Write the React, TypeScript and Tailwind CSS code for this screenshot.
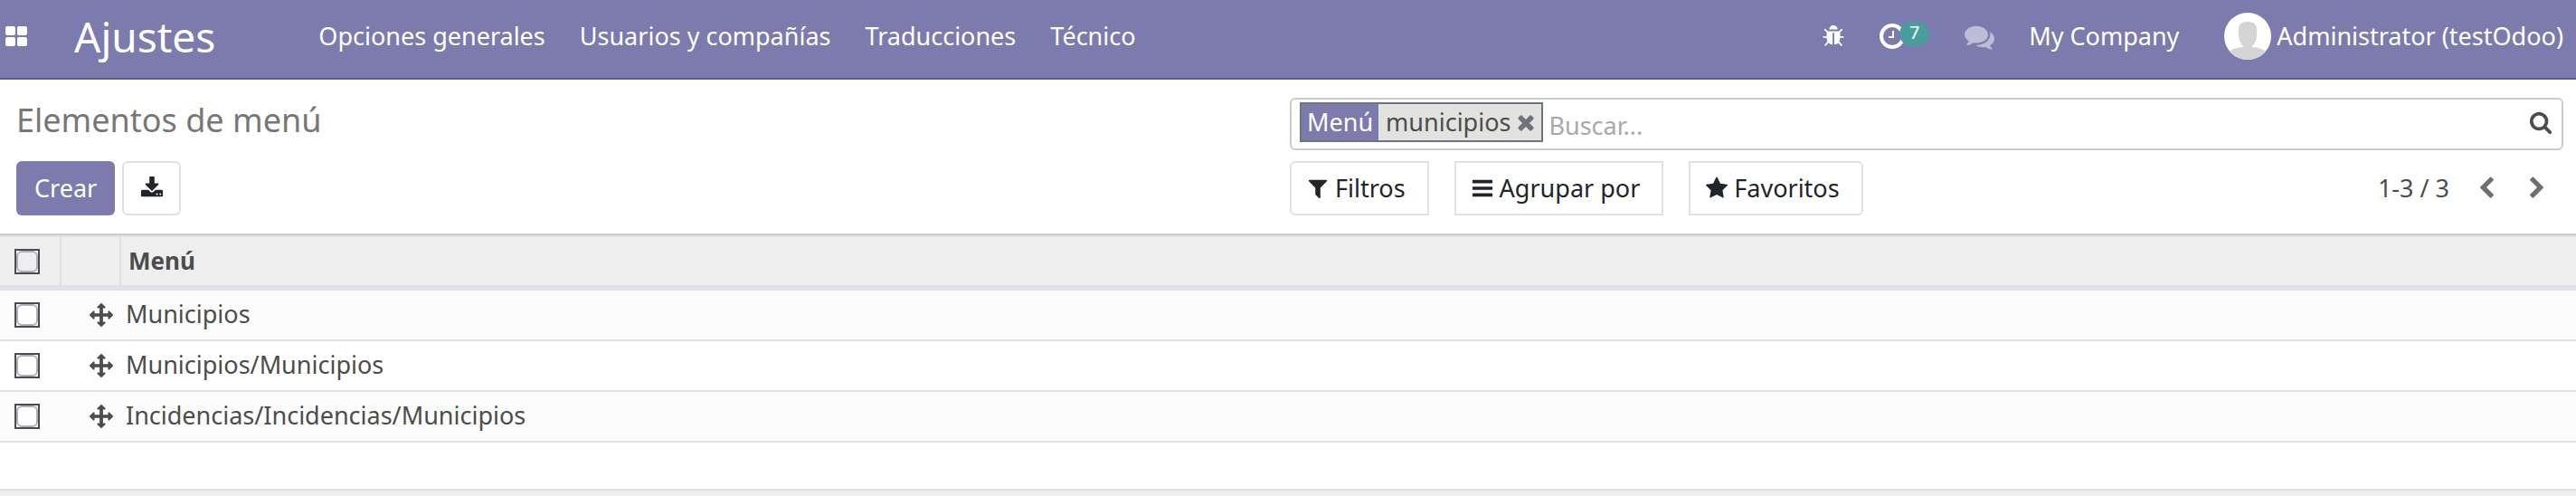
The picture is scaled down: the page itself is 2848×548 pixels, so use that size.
import React from "react";

const PATHS = {
  bug: "M1696 960q0 26-19 45t-45 19h-224q0 171-67 290l208 209q19 19 19 45t-19 45q-18 19-45 19t-45-19l-198-197q-5 5-15 13t-42 28.5-65 36.5-82 29-97 13v-896h-128v896q-51 0-101.5-13.5t-87-33-66-39-43.5-32.5l-15-14-183 207q-20 21-48 21-24 0-43-16-19-18-20.5-44.5t15.5-46.5l202-227q-58-114-58-274h-224q-26 0-45-19t-19-45 19-45 45-19h224v-294l-173-173q-19-19-19-45t19-45 45-19 45 19l173 173h844l173-173q19-19 45-19t45 19 19 45-19 45l-173 173v294h224q26 0 45 19t19 45zm-480-576h-640q0-133 93.5-226.5t226.5-93.5 226.5 93.5 93.5 226.5z",
  comments:
    "M1408 768q0 139-94 257t-256.5 186.5-353.5 68.5q-86 0-176-16-124 88-278 128-36 9-86 16h-3q-11 0-20.5-8t-11.5-21q-1-3-1-6.5t.5-6.5 2-6l2.5-5 3.5-5.5 4-5 4.5-5 4-4.5q5-6 23-25t26-29.5 22.5-29 25-38.5 20.5-44q-124-72-195-177t-71-224q0-139 94-257t256.5-186.5 353.5-68.5 353.5 68.5 256.5 186.5 94 257zm384 256q0 120-71 224.5t-195 176.5q10 24 20.5 44t25 38.5 22.5 29 26 29.5 23 25q1 1 4 4.5t4.5 5 4 5 3.5 5.5l2.5 5 2 6 .5 6.5-1 6.5q-3 14-13 22t-22 7q-50-7-86-16-154-40-278-128-90 16-176 16-271 0-472-132 58 4 88 4 161 0 309-45t264-129q125-92 192-212t67-254q0-77-23-152 129 71 204 178t75 230z",
  download:
    "M1344 1344q0-26-19-45t-45-19-45 19-19 45 19 45 45 19 45-19 19-45zm256 0q0-26-19-45t-45-19-45 19-19 45 19 45 45 19 45-19 19-45zm128-224v320q0 40-28 68t-68 28h-1472q-40 0-68-28t-28-68v-320q0-40 28-68t68-28h465l135 136q58 56 136 56t136-56l136-136h464q40 0 68 28t28 68zm-325-569q17 41-14 70l-448 448q-18 19-45 19t-45-19l-448-448q-31-29-14-70 17-39 59-39h256v-448q0-26 19-45t45-19h256q26 0 45 19t19 45v448h256q42 0 59 39z",
  filter:
    "M1595 295q17 41-14 70l-493 493v742q0 42-39 59-13 5-25 5-27 0-45-19l-256-256q-19-19-19-45v-486l-493-493q-31-29-14-70 17-39 59-39h1280q42 0 59 39z",
  bars: "M1664 1344v128q0 26-19 45t-45 19h-1408q-26 0-45-19t-19-45v-128q0-26 19-45t45-19h1408q26 0 45 19t19 45zm0-512v128q0 26-19 45t-45 19h-1408q-26 0-45-19t-19-45v-128q0-26 19-45t45-19h1408q26 0 45 19t19 45zm0-512v128q0 26-19 45t-45 19h-1408q-26 0-45-19t-19-45v-128q0-26 19-45t45-19h1408q26 0 45 19t19 45z",
  star: "M1728 647q0 22-26 48l-363 354 86 500q1 7 1 20 0 21-10.5 35.5t-30.5 14.5q-19 0-40-12l-449-236-449 236q-22 12-40 12-21 0-31.5-14.5t-10.5-35.5q0-6 2-20l86-500-364-354q-25-27-25-48 0-37 56-46l502-73 225-455q19-41 49-41t49 41l225 455 502 73q56 9 56 46z",
  search:
    "M1216 832q0-185-131.5-316.5t-316.5-131.5-316.5 131.5-131.5 316.5 131.5 316.5 316.5 131.5 316.5-131.5 131.5-316.5zm512 832q0 52-38 90t-90 38q-54 0-90-38l-343-342q-179 124-399 124-143 0-273.5-55.5t-225-150-150-225-55.5-273.5 55.5-273.5 150-225 225-150 273.5-55.5 273.5 55.5 225 150 150 225 55.5 273.5q0 220-124 399l343 343q37 37 37 90z",
  times:
    "M1490 1322q0 40-28 68l-136 136q-28 28-68 28t-68-28l-294-294-294 294q-28 28-68 28t-68-28l-136-136q-28-28-28-68t28-68l294-294-294-294q-28-28-28-68t28-68l136-136q28-28 68-28t68 28l294 294 294-294q28-28 68-28t68 28l136 136q28 28 28 68t-28 68l-294 294 294 294q28 28 28 68z",
  left: "M1427 301l-531 531 531 531q19 19 19 45t-19 45l-166 166q-19 19-45 19t-45-19l-742-742q-19-19-19-45t19-45l742-742q19-19 45-19t45 19l166 166q19 19 19 45t-19 45z",
  right:
    "M1363 877l-742 742q-19 19-45 19t-45-19l-166-166q-19-19-19-45t19-45l531-531-531-531q-19-19-19-45t19-45l166-166q19-19 45-19t45 19l742 742q19 19 19 45t-19 45z",
  arrows:
    "M1792 896q0 26-19 45l-256 256q-19 19-45 19t-45-19-19-45v-128h-384v384h128q26 0 45 19t19 45-19 45l-256 256q-19 19-45 19t-45-19l-256-256q-19-19-19-45t19-45 45-19h128v-384h-384v128q0 26-19 45t-45 19-45-19l-256-256q-19-19-19-45t19-45l256-256q19-19 45-19t45 19 19 45v128h384v-384h-128q-26 0-45-19t-19-45 19-45l256-256q19-19 45-19t45 19l256 256q19 19 19 45t-19 45-45 19h-128v384h384v-128q0-26 19-45t45-19 45 19l256 256q19 19 19 45z",
};

function Icon({ name, className = "size-[26px]" }: { name: keyof typeof PATHS; className?: string }) {
  return (
    <svg viewBox="0 0 1792 1792" fill="currentColor" aria-hidden="true" className={`shrink-0 ${className}`}>
      <path d={PATHS[name]} />
    </svg>
  );
}

function CheckBox({ label, className = "bg-white" }: { label: string; className?: string }) {
  return (
    <span className="flex size-7 border-2 border-[#4c4c4c] bg-white">
      <input
        type="checkbox"
        aria-label={label}
        className={`size-6 appearance-none rounded-md border-2 border-[#adb1bd] checked:bg-[#7c7bad] ${className}`}
      />
    </span>
  );
}

const MENU = ["Opciones generales", "Usuarios y compañías", "Traducciones", "Técnico"];
const ROWS = ["Municipios", "Municipios/Municipios", "Incidencias/Incidencias/Municipios"];

function Navbar() {
  return (
    <header className="flex h-[88px] items-center border-b-2 border-[#5f5e97] bg-[#7c7bad] pr-[14px] pb-[6px] pl-[6px] whitespace-nowrap text-white">
      <button type="button" aria-label="Aplicaciones" className="shrink-0">
        <svg viewBox="0 0 24 22" fill="currentColor" className="h-[22px] w-6">
          <rect width="11" height="10" rx="2" />
          <rect x="13" width="11" height="10" rx="2" />
          <rect y="12" width="11" height="10" rx="2" />
          <rect x="13" y="12" width="11" height="10" rx="2" />
        </svg>
      </button>
      <a href="#ajustes" className="ml-[52px] text-[46px] leading-none">
        Ajustes
      </a>
      <nav className="ml-[114px] flex gap-[38px]">
        {MENU.map((item) => (
          <a key={item} href="#menu">
            {item}
          </a>
        ))}
      </nav>
      <div className="ml-auto flex items-center">
        <button type="button" aria-label="Depurar" className="mr-[38px]">
          <Icon name="bug" />
        </button>
        <button type="button" aria-label="Actividades" className="relative mr-[66px]">
          <svg viewBox="0 0 28 28" fill="none" stroke="currentColor" className="size-7">
            <circle cx="14" cy="14" r="12" strokeWidth="4" />
            <path d="M15 8v7h-5" strokeWidth="2" />
          </svg>
          <span className="absolute -top-[2px] left-[22px] flex h-[27px] w-[33px] items-center justify-center rounded-full bg-[#489e9b] pb-1 text-xl leading-none">
            7
          </span>
        </button>
        <button type="button" aria-label="Conversaciones" className="mr-[38px] opacity-50">
          <Icon name="comments" className="size-[33px]" />
        </button>
        <a href="#company">My Company</a>
        <button type="button" className="ml-[50px] flex items-center gap-[6px]">
          <svg viewBox="0 0 52 52" className="size-[52px] shrink-0">
            <defs>
              <clipPath id="avatar">
                <circle cx="26" cy="26" r="26" />
              </clipPath>
            </defs>
            <g clipPath="url(#avatar)">
              <rect width="52" height="52" fill="#fff" />
              <path
                d="M26 10c7 0 10 3 10 9v6c0 5-2 9-5 12v1c7 0 13 3 19 7v7H2v-7c6-4 12-7 19-7v-1c-3-3-5-7-5-12v-6c0-6 3-9 10-9z"
                fill="#d4d4d4"
              />
            </g>
          </svg>
          Administrator (testOdoo)
        </button>
      </div>
    </header>
  );
}

function ControlPanel() {
  return (
    <section className="grid grid-cols-2 gap-y-3 border-b-2 border-[#cccccc] pt-5 pr-[14px] pb-5 pl-[18px] whitespace-nowrap">
      <h1 className="text-[36px] leading-[50px] text-[#777777]">Elementos de menú</h1>
      <div className="flex h-[58px] items-center rounded-md border-2 border-[#cccccc] pr-[10px] pl-[9px]">
        <div className="mb-1 flex h-11 items-center border-2 border-[#6c757d] bg-[#e2e2e0] text-[#4c4c4c]">
          <span className="flex h-full items-center bg-[#7c7bad] px-[6px] text-white">Menú</span>
          <span className="pl-2">municipios</span>
          <button type="button" aria-label="Quitar" className="px-1 text-[#6c757d]">
            <Icon name="times" />
          </button>
        </div>
        <input
          type="text"
          aria-label="Buscar"
          placeholder="Buscar..."
          className="ml-[6px] min-w-0 flex-1 pt-1 outline-none placeholder:text-[#a8a8a8]"
        />
        <button type="button" aria-label="Buscar" className="mb-1">
          <Icon name="search" />
        </button>
      </div>
      <div className="flex gap-2">
        <button type="button" className="h-[60px] rounded-md bg-[#7c7bad] px-5 text-white">
          Crear
        </button>
        <button
          type="button"
          aria-label="Exportar"
          className="flex h-[60px] w-[65px] items-center justify-center rounded-md border-2 border-[#dee2e6] text-[#212529]"
        >
          <Icon name="download" />
        </button>
      </div>
      <div className="flex items-center justify-between">
        <div className="flex gap-7 text-[#212529]">
          <button type="button" className="flex h-[60px] items-center gap-[6px] rounded-l-md border-2 border-[#dee2e6] pr-6 pl-4">
            <Icon name="filter" />
            Filtros
          </button>
          <button type="button" className="flex h-[60px] items-center gap-[6px] border-2 border-[#dee2e6] pr-6 pl-4">
            <Icon name="bars" />
            Agrupar por
          </button>
          <button type="button" className="flex h-[60px] items-center gap-[6px] rounded-r-md border-2 border-[#dee2e6] pr-6 pl-4">
            <Icon name="star" />
            Favoritos
          </button>
        </div>
        <div className="flex items-center pr-4">
          <span className="mr-7">1-3 / 3</span>
          <button type="button" aria-label="Anterior" className="mr-[30px] text-[#6c6f73]">
            <Icon name="left" />
          </button>
          <button type="button" aria-label="Siguiente" className="text-[#6c6f73]">
            <Icon name="right" />
          </button>
        </div>
      </div>
    </section>
  );
}

function MenuTable() {
  return (
    <table className="w-full border-separate border-spacing-0 border-t-2 border-[#dee2e6] text-left">
      <thead className="bg-[#eeeeee] text-[26px]">
        <tr>
          <th className="h-[59px] w-[68px] border-r-2 border-b-[6px] border-[#dee2e6] p-0 pl-4">
            <CheckBox label="Seleccionar todo" className="bg-[#eeeeee]" />
          </th>
          <th className="w-[66px] border-r-2 border-b-[6px] border-[#dee2e6] p-0" />
          <th className="border-b-[6px] border-[#dee2e6] p-0 pb-[2px] pl-2 font-bold">Menú</th>
        </tr>
      </thead>
      <tbody>
        {ROWS.map((row) => (
          <tr key={row} className="odd:bg-[#fcfcfc]">
            <td className="h-14 border-b-2 border-[#dee2e6] p-0 pl-4">
              <CheckBox label={row} />
            </td>
            <td className="border-b-2 border-[#dee2e6] p-0">
              <Icon name="arrows" className="mr-[9px] ml-auto block size-[26px]" />
            </td>
            <td className="border-b-2 border-[#dee2e6] p-0 pb-[2px] pl-[5px]">{row}</td>
          </tr>
        ))}
        <tr>
          <td colSpan={3} className="h-[53px] border-b-2 border-[#dee2e6] p-0" />
        </tr>
      </tbody>
      <tfoot>
        <tr>
          <td colSpan={3} className="h-[6px] bg-[#eeeeee] p-0" />
        </tr>
      </tfoot>
    </table>
  );
}

export default function App() {
  return (
    <div className="bg-white font-['Noto_Sans','Open_Sans',sans-serif] text-[27px] leading-9 text-[#4c4c4c]">
      <Navbar />
      <main>
        <ControlPanel />
        <MenuTable />
      </main>
    </div>
  );
}
